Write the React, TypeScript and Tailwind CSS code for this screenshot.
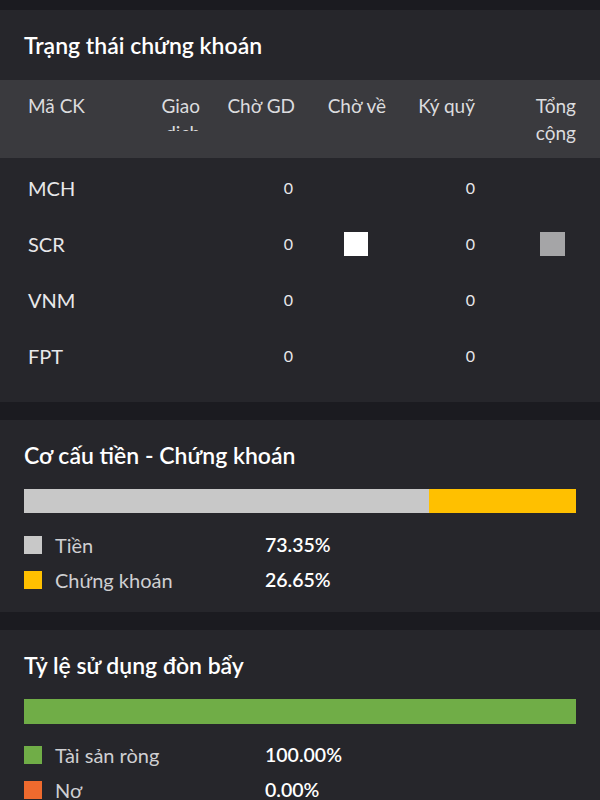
import React from "react";

const rows = ["MCH", "SCR", "VNM", "FPT"];

function Legend({ color, label, value }: { color: string; label: string; value: string }) {
  return (
    <div className="flex items-center h-[35px]">
      <div className="w-[18px] h-[18px]" style={{ backgroundColor: color }} />
      <div className="ml-[13px] w-[210px] text-[20px] text-[#cfcfd2]">{label}</div>
      <div className="text-[19.5px] font-semibold text-white">{value}</div>
    </div>
  );
}

export default function App() {
  const grid = "grid grid-cols-[122px_50px_95px_91px_89px_101px]";
  return (
    <div
      className="w-[600px] h-[800px] overflow-hidden bg-[#1b1b20] pt-[10px]"
      style={{ fontFamily: 'Lato, "Noto Sans", sans-serif' }}
    >
      {/* Card 1 */}
      <div className="bg-[#26262b] h-[392px]">
        <div className="h-[70px] flex items-center pl-[24px] text-[23px] font-semibold text-white">
          Trạng thái chứng khoán
        </div>
        <div className={`${grid} bg-[#3a3a3e] h-[78px] pl-[28px] pt-[12px] text-[19px] text-[#dcdcde] leading-[27px]`}>
          <div>Mã CK</div>
          <div className="text-right h-[39px] overflow-hidden">Giao dịch</div>
          <div className="text-right">Chờ GD</div>
          <div className="text-right">Chờ về</div>
          <div className="text-right">Ký quỹ</div>
          <div className="flex justify-end">
            <div className="w-[50px] text-right">Tổng cộng</div>
          </div>
        </div>
        <div className="pt-[2px]">
          {rows.map((r) => (
            <div key={r} className={`${grid} pl-[28px] h-[56px] items-center`}>
              <div className="text-[20px] text-[#e8e8ea]">{r}</div>
              <div />
              <div className="text-right text-[16px] text-[#e8e8ea] pr-[2px]">0</div>
              <div className="flex justify-end pr-[18px]">
                {r === "SCR" && <div className="w-[24px] h-[24px] bg-white" />}
              </div>
              <div className="text-right text-[16px] text-[#e8e8ea]">0</div>
              <div className="flex justify-end pr-[11px]">
                {r === "SCR" && <div className="w-[25px] h-[24px] bg-[#a5a5a7]" />}
              </div>
            </div>
          ))}
        </div>
      </div>

      {/* Card 2 */}
      <div className="mt-[18px] bg-[#26262b] h-[192px] px-[24px]">
        <div className="h-[70px] flex items-center text-[23px] font-semibold text-white">
          Cơ cấu tiền - Chứng khoán
        </div>
        <div className="flex h-[24px] -mt-[1px]">
          <div className="bg-[#c8c8c8]" style={{ width: "73.35%" }} />
          <div className="bg-[#ffc000]" style={{ width: "26.65%" }} />
        </div>
        <div className="mt-[14px]">
          <Legend color="#c8c8c8" label="Tiền" value="73.35%" />
          <Legend color="#ffc000" label="Chứng khoán" value="26.65%" />
        </div>
      </div>

      {/* Card 3 */}
      <div className="mt-[18px] bg-[#26262b] h-[200px] px-[24px]">
        <div className="h-[70px] flex items-center text-[23px] font-semibold text-white">
          Tỷ lệ sử dụng đòn bẩy
        </div>
        <div className="flex h-[25px] -mt-[1px]">
          <div className="bg-[#70ad47] w-full" />
        </div>
        <div className="mt-[13px]">
          <Legend color="#70ad47" label="Tài sản ròng" value="100.00%" />
          <Legend color="#ee6a2e" label="Nơ" value="0.00%" />
        </div>
      </div>
    </div>
  );
}
